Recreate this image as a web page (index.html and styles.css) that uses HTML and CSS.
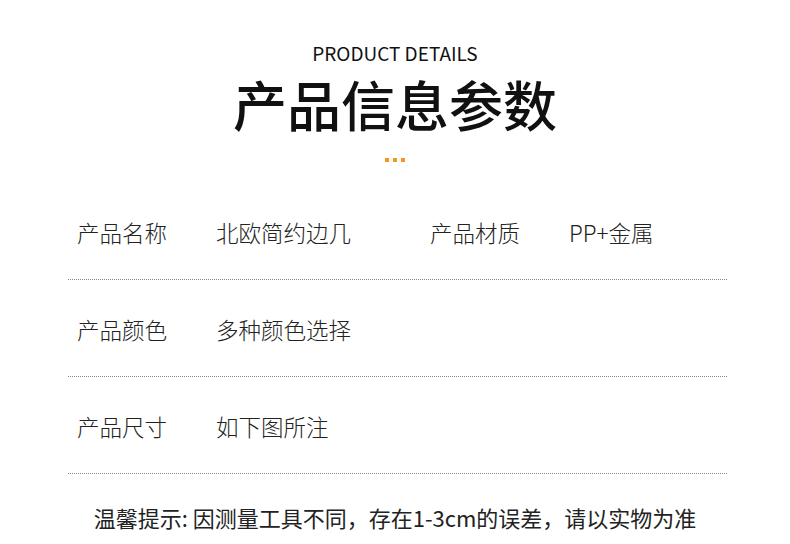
FILE: index.html
```html
<!DOCTYPE html>
<html lang="zh-CN">
<head>
    <meta charset="UTF-8">
    <meta name="viewport" content="width=device-width, initial-scale=1.0">
    <title>产品信息参数</title>
    <link rel="stylesheet" href="styles.css">
</head>
<body>

    <div class="page">
        <!-- Heading -->
        <div class="heading">
            <div class="heading-en">PRODUCT DETAILS</div>
            <h1 class="heading-cn">产品信息参数</h1>
            <div class="dots"><span></span><span></span><span></span></div>
        </div>

        <!-- Parameter table -->
        <div class="params">
            <div class="param-row">
                <div class="param-label">产品名称</div>
                <div class="param-value">北欧简约边几</div>
                <div class="param-label">产品材质</div>
                <div class="param-value">PP+金属</div>
            </div>
            <div class="param-row">
                <div class="param-label">产品颜色</div>
                <div class="param-value">多种颜色选择</div>
            </div>
            <div class="param-row">
                <div class="param-label">产品尺寸</div>
                <div class="param-value">如下图所注</div>
            </div>
        </div>

        <p class="tip">温馨提示: 因测量工具不同，存在1-3cm的误差，请以实物为准</p>
    </div>

</body>
</html>
```

FILE: styles.css
```css
body {
    margin: 0;
    background-color: #fff;
    font-family: "Noto Sans CJK SC", "Noto Sans", sans-serif;
    color: #222;
}
.page {
    width: 790px;
    height: 544px;
    overflow: hidden;
}
.heading {
    padding-top: 40px;
    text-align: center;
}
.heading-en {
    font-size: 19px;
    line-height: 26px;
    color: #111;
}
.heading-cn {
    margin: 8px 0 0;
    font-size: 54px;
    line-height: 60px;
    font-weight: 500;
    color: #111;
}
.dots {
    display: flex;
    justify-content: center;
    gap: 4px;
    margin-top: 24px;
}
.dots span {
    width: 4px;
    height: 4px;
    background-color: #f7941d;
}
.params {
    margin: 0 63px 0 68px;
    padding-top: 21px;
}
.param-row {
    display: grid;
    grid-template-columns: 139px 214px 139px 1fr;
    padding: 34px 0 32px 9px;
    line-height: 30px;
    font-size: 22.5px;
    font-weight: 300;
    border-bottom: 1px dotted #888;
}
.tip {
    margin: 28px 0 0;
    text-align: center;
    font-size: 22px;
    line-height: 30px;
    color: #222;
}
```
